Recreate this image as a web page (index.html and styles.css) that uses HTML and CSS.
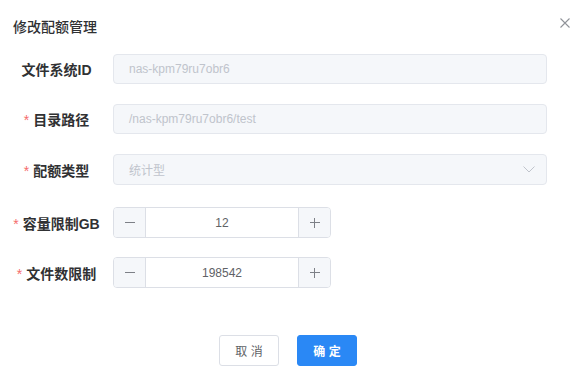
FILE: index.html
```html
<!DOCTYPE html>
<html lang="zh-CN">

<head>
    <meta charset="UTF-8">
    <meta name="viewport" content="width=device-width, initial-scale=1.0">
    <title>修改配额管理</title>
    <link rel="stylesheet" href="styles.css">
</head>

<body>
    <div class="dialog">
        <!-- Header -->
        <div class="dialog-header">
            <span class="dialog-title">修改配额管理</span>
            <span class="dialog-close">
                <svg width="10" height="10" viewBox="0 0 10 10">
                    <path d="M0.5 0.5 L9.5 9.5 M9.5 0.5 L0.5 9.5" stroke="#909399" stroke-width="1.1" fill="none" />
                </svg>
            </span>
        </div>

        <!-- Form -->
        <div class="dialog-body">
            <div class="form-row">
                <label class="form-label">文件系统ID</label>
                <div class="input disabled">nas-kpm79ru7obr6</div>
            </div>
            <div class="form-row">
                <label class="form-label"><span class="req">*</span>目录路径</label>
                <div class="input disabled">/nas-kpm79ru7obr6/test</div>
            </div>
            <div class="form-row">
                <label class="form-label"><span class="req">*</span>配额类型</label>
                <div class="input disabled select">
                    <span>统计型</span>
                    <svg width="12" height="7" viewBox="0 0 12 7">
                        <path d="M0.5 0.5 L6 6 L11.5 0.5" stroke="#c0c4cc" stroke-width="1" fill="none" />
                    </svg>
                </div>
            </div>
            <div class="form-row row-4">
                <label class="form-label"><span class="req">*</span>容量限制GB</label>
                <div class="stepper">
                    <span class="step-btn minus"></span>
                    <span class="step-value">12</span>
                    <span class="step-btn plus"></span>
                </div>
            </div>
            <div class="form-row row-5">
                <label class="form-label"><span class="req">*</span>文件数限制</label>
                <div class="stepper">
                    <span class="step-btn minus"></span>
                    <span class="step-value">198542</span>
                    <span class="step-btn plus"></span>
                </div>
            </div>
        </div>

        <!-- Footer -->
        <div class="dialog-footer">
            <button class="btn">取 消</button>
            <button class="btn btn-primary">确 定</button>
        </div>
    </div>
</body>

</html>
```

FILE: styles.css
```css
body {
    font-family: "Liberation Sans", "Noto Sans CJK SC", sans-serif;
    margin: 0;
    padding: 0;
    background-color: #fff;
    color: #303133;
}

.dialog {
    width: 583px;
    height: 381px;
    background: #fff;
}

/* Header */
.dialog-header {
    display: flex;
    justify-content: space-between;
    align-items: flex-start;
    padding: 17px 13px 0 13px;
    height: 20px;
}

.dialog-title {
    font-size: 14px;
    line-height: 20px;
    font-weight: 500;
    color: #303133;
}

.dialog-close {
    display: flex;
    width: 10px;
    height: 10px;
    margin-top: 1px;
}

/* Form */
.dialog-body {
    padding-top: 17px;
}

.form-row {
    display: flex;
    align-items: center;
    margin-bottom: 20px;
}

.row-4 {
    padding-top: 2px;
}

.row-5 {
    margin-top: -1px;
}

.form-label {
    width: 113px;
    text-align: center;
    font-size: 14px;
    font-weight: 700;
    color: #303133;
}

.req {
    color: #f56c6c;
    font-weight: 400;
    margin-right: 4px;
}

.input {
    box-sizing: border-box;
    width: 434px;
    height: 30px;
    border: 1px solid #e4e7ed;
    border-radius: 4px;
    padding: 0 15px;
    display: flex;
    align-items: center;
    font-size: 12px;
}

.input.disabled {
    background-color: #f5f7fa;
    color: #c0c4cc;
}

.select {
    height: 31px;
    justify-content: space-between;
    padding-right: 11px;
}

.select svg {
    display: block;
}

/* Number stepper */
.stepper {
    box-sizing: border-box;
    width: 218px;
    height: 31px;
    border: 1px solid #dcdfe6;
    border-radius: 4px;
    display: flex;
    overflow: hidden;
}

.step-btn {
    position: relative;
    width: 31px;
    background-color: #f5f7fa;
}

.step-btn.minus {
    border-right: 1px solid #dcdfe6;
}

.step-btn.plus {
    border-left: 1px solid #dcdfe6;
}

.step-btn::before,
.step-btn.plus::after {
    content: "";
    position: absolute;
    left: 50%;
    top: 50%;
    width: 10px;
    height: 1px;
    margin: -0.5px 0 0 -5px;
    background-color: #7d8087;
}

.step-btn.plus::after {
    width: 1px;
    height: 10px;
    margin: -5px 0 0 -0.5px;
}

.step-value {
    flex: 1;
    display: flex;
    align-items: center;
    justify-content: center;
    font-size: 12px;
    color: #606266;
}

/* Footer */
.dialog-footer {
    display: flex;
    justify-content: center;
    gap: 18px;
    padding-right: 7px;
    margin-top: 47px;
}

.btn {
    box-sizing: border-box;
    width: 60px;
    height: 31px;
    border: 1px solid #dcdfe6;
    border-radius: 3px;
    background: #fff;
    color: #606266;
    font-family: "Liberation Sans", "Noto Sans CJK SC", sans-serif;
    font-size: 12px;
    padding: 0;
    cursor: pointer;
}

.btn-primary {
    background-color: #2a88f5;
    border-color: #2a88f5;
    color: #fff;
    font-weight: 700;
}
```
